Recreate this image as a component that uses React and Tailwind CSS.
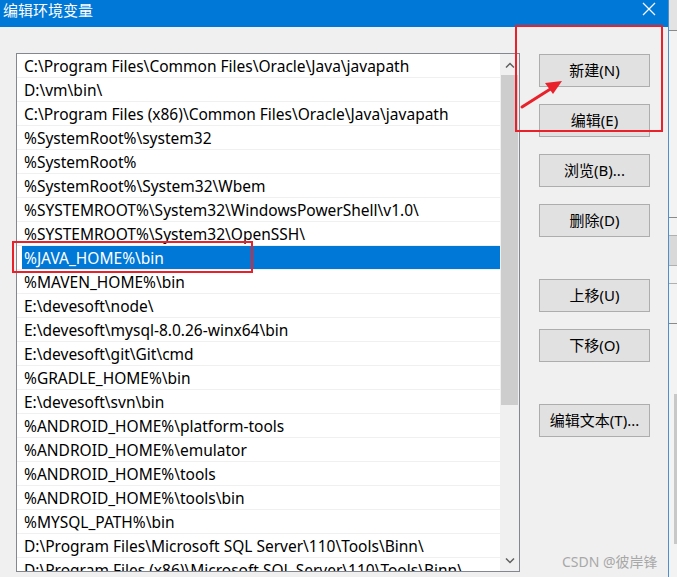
import React from "react";

const items = [
  "C:\\Program Files\\Common Files\\Oracle\\Java\\javapath",
  "D:\\vm\\bin\\",
  "C:\\Program Files (x86)\\Common Files\\Oracle\\Java\\javapath",
  "%SystemRoot%\\system32",
  "%SystemRoot%",
  "%SystemRoot%\\System32\\Wbem",
  "%SYSTEMROOT%\\System32\\WindowsPowerShell\\v1.0\\",
  "%SYSTEMROOT%\\System32\\OpenSSH\\",
  "%JAVA_HOME%\\bin",
  "%MAVEN_HOME%\\bin",
  "E:\\devesoft\\node\\",
  "E:\\devesoft\\mysql-8.0.26-winx64\\bin",
  "E:\\devesoft\\git\\Git\\cmd",
  "%GRADLE_HOME%\\bin",
  "E:\\devesoft\\svn\\bin",
  "%ANDROID_HOME%\\platform-tools",
  "%ANDROID_HOME%\\emulator",
  "%ANDROID_HOME%\\tools",
  "%ANDROID_HOME%\\tools\\bin",
  "%MYSQL_PATH%\\bin",
  "D:\\Program Files\\Microsoft SQL Server\\110\\Tools\\Binn\\",
  "D:\\Program Files (x86)\\Microsoft SQL Server\\110\\Tools\\Binn\\",
];

function Btn({ children, className = "" }) {
  return (
    <div
      className={
        "w-[111px] h-[33px] bg-[#e1e1e1] border border-[#adadad] flex items-center justify-center text-[15px] text-black " +
        className
      }
    >
      {children}
    </div>
  );
}

export default function App() {
  return (
    <div className="relative w-[677px] h-[577px] overflow-hidden flex bg-[#f0f0f0] font-['Noto_Sans','Noto_Sans_CJK_SC',sans-serif]">
      {/* dialog */}
      <div className="w-[668px] h-full flex flex-col">
        <div className="h-[27px] bg-[#0078d7] flex items-start justify-between pl-[3px] pr-[12px] shrink-0">
          <span className="text-white text-[15px] leading-[20px] font-['Noto_Sans_CJK_SC',sans-serif]">
            编辑环境变量
          </span>
          <svg width="14" height="14" viewBox="0 0 14 14" className="mt-[2px]">
            <path d="M1 1 L13 13 M13 1 L1 13" stroke="white" strokeWidth="1.2" />
          </svg>
        </div>
        <div className="flex flex-1 pl-[16px] pt-[26px]">
          {/* list */}
          <div className="w-[504px] h-[519px] border border-[#828790] bg-white flex overflow-hidden shrink-0">
            <div className="flex-1 flex flex-col overflow-hidden">
              {items.map((t, i) => (
                <div key={i} className="h-[24px] shrink-0 border-b border-[#f0f0f0] flex">
                  <div
                    className={
                      "ml-[5px] flex-1 h-[23px] flex items-center pl-[2px] pt-[2px] text-[15.5px] whitespace-nowrap " +
                      (i === 8 ? "bg-[#0078d7] text-white" : "text-black")
                    }
                  >
                    {t}
                  </div>
                </div>
              ))}
            </div>
            {/* scrollbar */}
            <div className="w-[19px] shrink-0 bg-[#f0f0f0] flex flex-col">
              <div className="h-[21px] flex items-center justify-center shrink-0">
                <svg width="10" height="6" viewBox="0 0 10 6">
                  <path d="M1 5.5 L5 1.5 L9 5.5" stroke="#606060" strokeWidth="1.5" fill="none" />
                </svg>
              </div>
              <div className="h-[330px] mx-[1px] bg-[#cdcdcd] shrink-0" />
              <div className="flex-1" />
              <div className="h-[19px] flex items-center justify-center shrink-0 mb-[1px]">
                <svg width="10" height="6" viewBox="0 0 10 6">
                  <path d="M1 0.5 L5 4.5 L9 0.5" stroke="#606060" strokeWidth="1.5" fill="none" />
                </svg>
              </div>
            </div>
          </div>
          {/* buttons */}
          <div className="flex flex-col ml-[19px] pt-[1px]">
            <Btn>新建(N)</Btn>
            <Btn className="mt-[17px]">编辑(E)</Btn>
            <Btn className="mt-[17px]">浏览(B)...</Btn>
            <Btn className="mt-[17px]">删除(D)</Btn>
            <Btn className="mt-[42px]">上移(U)</Btn>
            <Btn className="mt-[17px]">下移(O)</Btn>
            <Btn className="mt-[42px]">编辑文本(T)...</Btn>
          </div>
        </div>
      </div>
      {/* background window strip */}
      <div className="w-[9px] h-full border-l border-[#4f8fd0] bg-[#f3f3f3] flex flex-col">
        <div className="h-[31px] bg-[#e3e3e3] border-b border-[#8a8a8a] shrink-0" />
        <div className="h-[186px] shrink-0" />
        <div className="h-[18px] border-t border-[#8a8a8a] shrink-0" />
        <div className="h-[30px] border-t border-[#b0b0b0] bg-[#d9d9d9] shrink-0" />
        <div className="h-[18px] border-t border-[#b0b0b0] shrink-0" />
        <div className="h-[40px] border-t border-[#b0b0b0] shrink-0" />
        <div className="flex-1 border-t border-[#8a8a8a] flex justify-end">
          <div className="w-[3px] mt-[70px] h-[150px] bg-[#c8c8c8]" />
        </div>
      </div>

      {/* annotations */}
      <div className="absolute left-[515px] top-[25px] w-[148px] h-[107px] border-2 border-[#e8212b]" />
      <div className="absolute left-[12px] top-[241px] w-[241px] h-[32px] border-2 border-[#e8212b]" />
      <svg className="absolute left-0 top-0" width="677" height="577" viewBox="0 0 677 577">
        <line x1="522" y1="107" x2="552" y2="88" stroke="#e8212b" strokeWidth="3" strokeLinecap="round" />
        <polygon points="562,81 545,83 553,94" fill="#e8212b" />
      </svg>
      <div className="absolute left-[562px] top-[551px] text-[14px] text-[#a8a8a8] whitespace-nowrap">
        CSDN @彼岸锋
      </div>
    </div>
  );
}
